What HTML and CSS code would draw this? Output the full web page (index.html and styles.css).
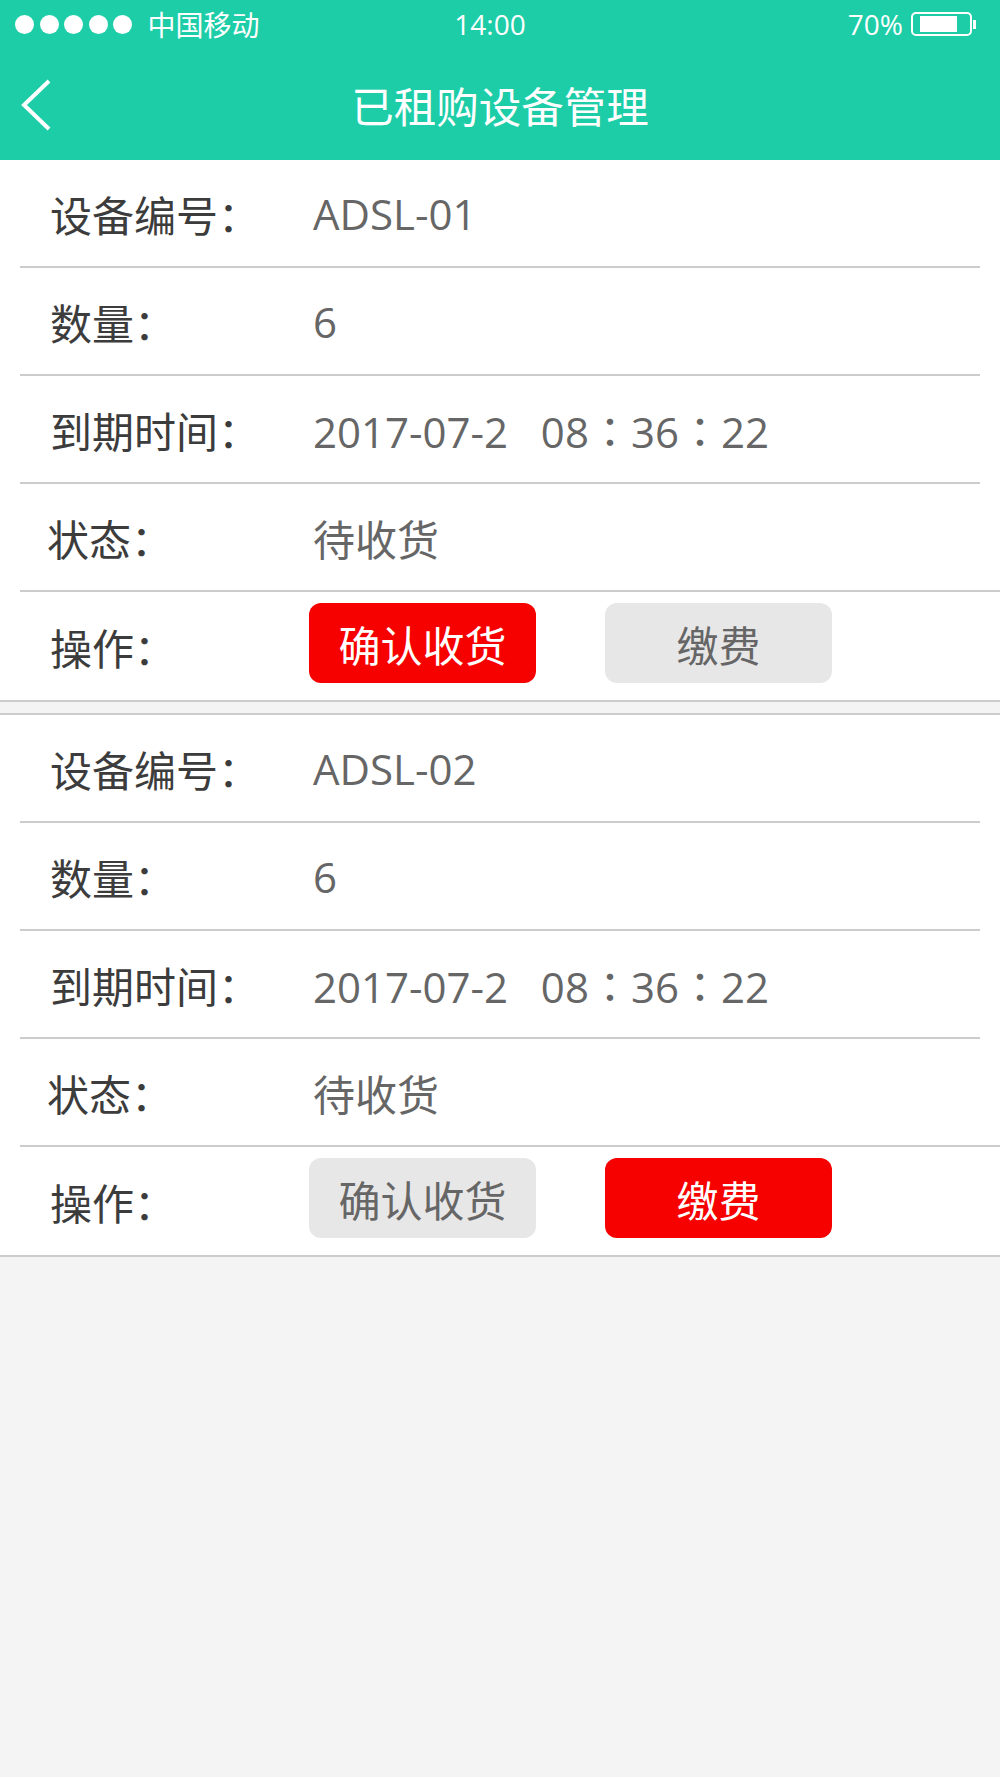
FILE: index.html
```html
<!DOCTYPE html>
<html lang="zh-CN">
<head>
  <meta charset="UTF-8">
  <meta name="viewport" content="width=device-width, initial-scale=1.0">
  <title>已租购设备管理</title>
  <link rel="stylesheet" href="styles.css">
</head>
<body>

  <header class="top">
    <div class="status">
      <div class="signal">
        <i></i><i></i><i></i><i></i><i></i>
        <span class="carrier">中国移动</span>
      </div>
      <span class="clock">14:00</span>
      <div class="power">
        <span>70%</span>
        <svg class="battery" width="66" height="24" viewBox="0 0 66 24">
          <rect x="1" y="1" width="59" height="22" rx="4" fill="none" stroke="#fff" stroke-width="2"/>
          <rect x="9" y="4" width="37" height="16" fill="#fff"/>
          <rect x="62" y="8" width="3" height="9" fill="#fff"/>
        </svg>
      </div>
    </div>
    <div class="nav">
      <svg class="back" width="34" height="54" viewBox="0 0 34 54">
        <path d="M30 3 L5 27 L30 51" fill="none" stroke="#fff" stroke-width="4"/>
      </svg>
      <h1>已租购设备管理</h1>
    </div>
  </header>

  <section class="card">
    <div class="row"><span class="label">设备编号<b>：</b></span><span class="value">ADSL-01</span></div>
    <div class="row"><span class="label">数量<b>：</b></span><span class="value">6</span></div>
    <div class="row"><span class="label">到期时间<b>：</b></span><span class="value">2017-07-2 &nbsp; 08<b>：</b>36<b>：</b>22</span></div>
    <div class="row row-full"><span class="label label-tight">状态<b>：</b></span><span class="value">待收货</span></div>
    <div class="row row-actions">
      <span class="label">操作<b>：</b></span>
      <div class="actions">
        <button class="btn btn-on">确认收货</button>
        <button class="btn">缴费</button>
      </div>
    </div>
  </section>

  <section class="card">
    <div class="row"><span class="label">设备编号<b>：</b></span><span class="value">ADSL-02</span></div>
    <div class="row"><span class="label">数量<b>：</b></span><span class="value">6</span></div>
    <div class="row"><span class="label">到期时间<b>：</b></span><span class="value">2017-07-2 &nbsp; 08<b>：</b>36<b>：</b>22</span></div>
    <div class="row row-full"><span class="label label-tight">状态<b>：</b></span><span class="value">待收货</span></div>
    <div class="row row-actions">
      <span class="label">操作<b>：</b></span>
      <div class="actions">
        <button class="btn">确认收货</button>
        <button class="btn btn-on">缴费</button>
      </div>
    </div>
  </section>

</body>
</html>
```

FILE: styles.css
```css
* {
  box-sizing: border-box;
}

body {
  margin: 0;
  min-height: 100vh;
  background: #f4f4f4;
  font-family: "Open Sans", "Noto Sans CJK SC", sans-serif;
}

.top {
  height: 160px;
  background: #1dcda7;
  color: #fff;
}

.status {
  height: 48px;
  padding: 0 23px 0 15px;
  display: grid;
  grid-template-columns: 1fr auto 1fr;
  align-items: center;
  font-size: 28px;
}

.signal {
  display: flex;
  align-items: center;
  gap: 5.5px;
}

.signal i {
  width: 19px;
  height: 19px;
  border-radius: 50%;
  background: #fff;
}

.carrier {
  margin-left: 10px;
  font-size: 28px;
}

.clock {
  position: relative;
  left: -6px;
}

.power {
  display: flex;
  align-items: center;
  justify-content: flex-end;
  gap: 8px;
}

.nav {
  height: 112px;
  display: flex;
  align-items: center;
  justify-content: center;
  position: relative;
}

.back {
  position: absolute;
  left: 19px;
  top: 30px;
}

.nav h1 {
  margin: 0;
  font-size: 42.5px;
  font-weight: normal;
}

.card {
  background: #fff;
  margin-bottom: 11px;
  border-bottom: 2px solid #ccc;
}

.card + .card {
  border-top: 2px solid #ccc;
}

.row {
  height: 108px;
  margin-left: 20px;
  margin-right: 20px;
  padding-left: 30px;
  border-bottom: 2px solid #ccc;
  display: flex;
  align-items: center;
  font-size: 42px;
}

.row-full {
  margin-right: 0;
}

.row-actions {
  margin: 0;
  padding-left: 50px;
  border-bottom: 0;
}

.label {
  width: 263px;
  color: #3c3c3c;
  flex: none;
}

.label-tight {
  margin-left: -3px;
  margin-right: 3px;
}

.label b,
.value b {
  font-family: "Noto Sans CJK TC", sans-serif;
  font-weight: normal;
}

.value {
  color: #666;
}

.actions {
  display: flex;
  gap: 69px;
  margin-left: -4px;
  margin-top: -6px;
}

.btn {
  width: 227px;
  height: 80px;
  border: none;
  border-radius: 12px;
  background: #e8e7e8;
  color: #666;
  font-family: inherit;
  font-size: 42px;
  padding: 0;
}

.btn-on {
  background: #f60000;
  color: #fff;
}
```
